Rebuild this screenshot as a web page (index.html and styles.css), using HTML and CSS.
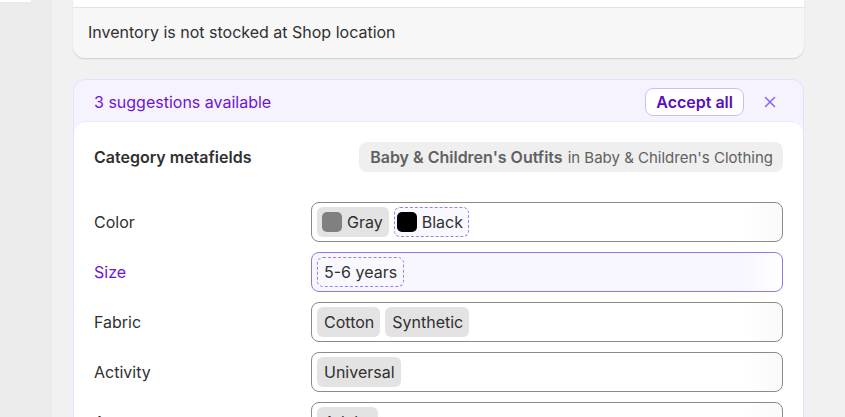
FILE: index.html
```html
<!DOCTYPE html>
<html>
<head>
    <title>Product metafields</title>
    <link rel="stylesheet" href="styles.css">
</head>
<body>
    <div id="sidebar">
        <div class="sidebar-tab"></div>
    </div>
    <div id="main">
        <div class="card inventory-card">
            <div class="card-body"></div>
            <div class="card-footer">Inventory is not stocked at Shop location</div>
        </div>

        <div class="suggest-card">
            <div class="suggest-header">
                <span class="suggest-title">3 suggestions available</span>
                <button class="accept-btn">Accept all</button>
                <button class="close-btn" aria-label="Dismiss">
                    <svg width="12" height="12" viewBox="0 0 12 12"><path d="M1.5 1.5l9 9M10.5 1.5l-9 9" stroke="currentColor" stroke-width="1.5" stroke-linecap="round"/></svg>
                </button>
            </div>
            <div class="suggest-body">
                <div class="meta-head">
                    <span class="meta-title">Category metafields</span>
                    <span class="category-badge"><b>Baby &amp; Children's Outfits</b> in Baby &amp; Children's Clothing</span>
                </div>
                <div class="meta-rows">
                    <div class="meta-row">
                        <span class="meta-label">Color</span>
                        <div class="field">
                            <span class="chip"><span class="swatch gray"></span>Gray</span>
                            <span class="chip suggested"><span class="swatch black"></span>Black</span>
                        </div>
                    </div>
                    <div class="meta-row">
                        <span class="meta-label suggested-label">Size</span>
                        <div class="field field-suggested">
                            <span class="chip suggested">5-6 years</span>
                        </div>
                    </div>
                    <div class="meta-row">
                        <span class="meta-label">Fabric</span>
                        <div class="field">
                            <span class="chip">Cotton</span>
                            <span class="chip">Synthetic</span>
                        </div>
                    </div>
                    <div class="meta-row">
                        <span class="meta-label">Activity</span>
                        <div class="field">
                            <span class="chip">Universal</span>
                        </div>
                    </div>
                    <div class="meta-row">
                        <span class="meta-label">Age group</span>
                        <div class="field">
                            <span class="chip">Adults</span>
                        </div>
                    </div>
                </div>
            </div>
        </div>
    </div>
</body>
</html>
```

FILE: styles.css
```css
body {
  margin: 0;
  background-color: #f1f1f1;
  font-family: Inter, "Noto Sans", sans-serif;
  font-size: 16px;
  color: #303030;
  display: flex;
  height: 417px;
  overflow: hidden;
}

#sidebar {
  width: 52px;
  flex-shrink: 0;
  background-color: #ebebeb;
}

.sidebar-tab {
  width: 31px;
  height: 2px;
  background-color: #fff;
}

#main {
  padding-left: 21px;
  width: 731px;
}

.card {
  border-radius: 0 0 12px 12px;
  box-shadow: 0 1px 0 #d4d4d4, 0 1px 2px #0000001a;
  overflow: hidden;
}

.card-body {
  height: 7px;
  background-color: #fff;
  border-bottom: 1px solid #e3e3e3;
}

.card-footer {
  background-color: #f7f7f7;
  height: 50px;
  box-sizing: border-box;
  padding: 0 0 2px 15px;
  display: flex;
  align-items: center;
}

.suggest-card {
  margin-top: 21px;
  background-color: #f6f3ff;
  border: 1px solid #e6e0fb;
  border-radius: 12px;
}

.suggest-header {
  height: 41px;
  box-sizing: border-box;
  padding: 2px 20px 0;
  display: flex;
  align-items: center;
  gap: 12px;
}

.suggest-title {
  color: #6c15d4;
  flex: 1;
}

.accept-btn {
  font: inherit;
  font-weight: 600;
  color: #5a0ec0;
  background-color: #fff;
  border: 1px solid #cdbdff;
  border-radius: 8px;
  height: 28px;
  padding: 0 10px;
  margin-left: -1px;
  cursor: pointer;
}

.close-btn {
  background: none;
  border: none;
  color: #8b63f2;
  width: 28px;
  height: 28px;
  display: flex;
  align-items: center;
  justify-content: center;
  padding: 0;
  margin-right: -1px;
  cursor: pointer;
}

.suggest-body {
  background-color: #fff;
  border-radius: 12px;
  border-top: 1px solid #ece8fb;
  padding: 20px 20px;
}

.meta-head {
  display: flex;
  align-items: center;
  justify-content: space-between;
  height: 30px;
}

.meta-title {
  font-weight: 600;
}

.category-badge {
  background-color: #efefef;
  border-radius: 8px;
  padding: 0 10px 0 11px;
  height: 30px;
  display: flex;
  align-items: center;
  gap: 5px;
  color: #616161;
  font-size: 15px;
}

.category-badge b {
  font-weight: 600;
  font-size: 16px;
}

.meta-rows {
  margin-top: 30px;
  display: flex;
  flex-direction: column;
  gap: 10px;
}

.meta-row {
  display: grid;
  grid-template-columns: 217px 1fr;
  align-items: center;
}

.suggested-label {
  color: #6c15d4;
}

.field {
  height: 40px;
  box-sizing: border-box;
  border: 1px solid #8a8a8a;
  border-radius: 8px;
  padding: 4px 5px;
  display: flex;
  align-items: center;
  gap: 5px;
  background: linear-gradient(to right, #fff 92%, #f9f9fb);
}

.field-suggested {
  border-color: #9273f6;
  background: linear-gradient(to right, #f8f6ff 92%, #fff);
}

.chip {
  height: 30px;
  box-sizing: border-box;
  background-color: #e3e3e3;
  border-radius: 6px;
  padding: 0 6px 0 7px;
  display: flex;
  align-items: center;
  gap: 5px;
}

.chip.suggested {
  background-color: #f9f8ff;
  border: 1px dashed #9c7df6;
  padding: 0 5px 0 4px;
}

.field-suggested .chip.suggested {
  padding: 0 6px;
}

.swatch {
  width: 20px;
  height: 20px;
  border-radius: 5px;
  margin-left: -2px;
}

.swatch.gray {
  background-color: #808080;
}

.swatch.black {
  background-color: #000;
}
```
